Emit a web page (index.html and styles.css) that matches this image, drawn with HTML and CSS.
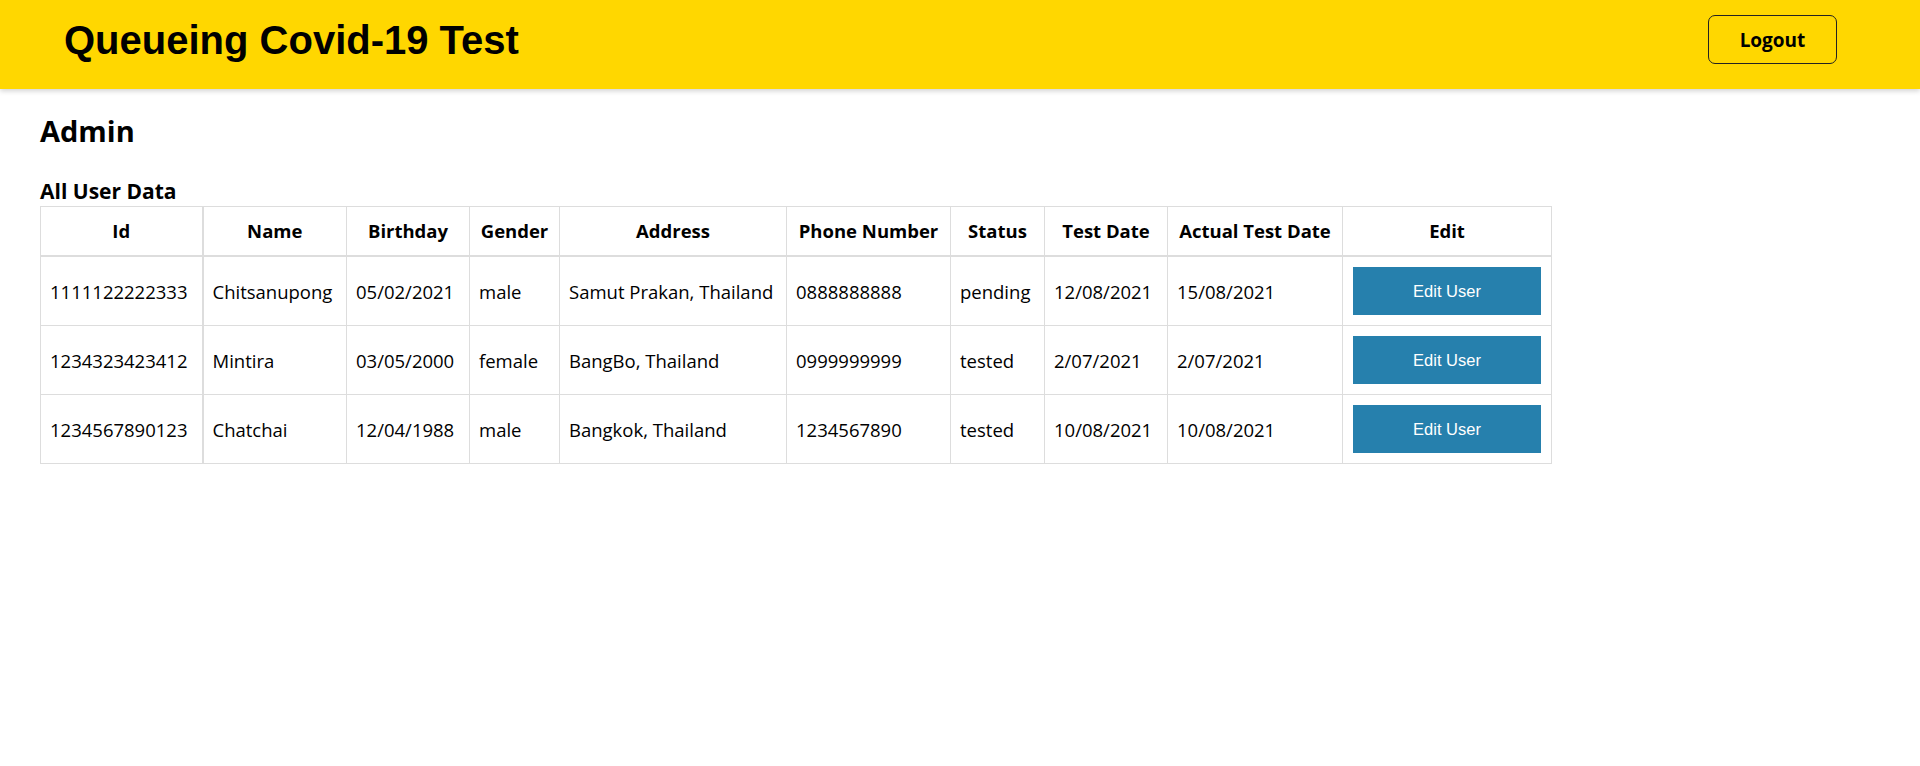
FILE: index.html
```html
<!DOCTYPE html>
<html>
<head>
<meta charset="utf-8">
<title>Queueing Covid-19 Test</title>
<link rel="stylesheet" href="styles.css">
</head>
<body>
<header class="topbar">
  <h1 class="brand">Queueing Covid-19 Test</h1>
  <button class="logout">Logout</button>
</header>
<main class="content">
  <h2 class="page-title">Admin</h2>
  <h3 class="section-title">All User Data</h3>
  <table class="users">
    <colgroup>
      <col class="c-id"><col class="c-name"><col class="c-bday"><col class="c-gender"><col class="c-addr"><col class="c-phone"><col class="c-status"><col class="c-date"><col class="c-actual"><col class="c-edit">
    </colgroup>
    <thead>
      <tr>
        <th class="first">Id</th><th>Name</th><th>Birthday</th><th>Gender</th><th>Address</th><th>Phone Number</th><th>Status</th><th>Test Date</th><th>Actual Test Date</th><th>Edit</th>
      </tr>
    </thead>
    <tbody>
      <tr>
        <td class="first">1111122222333</td><td>Chitsanupong</td><td>05/02/2021</td><td>male</td><td>Samut Prakan, Thailand</td><td>0888888888</td><td>pending</td><td>12/08/2021</td><td>15/08/2021</td><td class="edit"><button class="edit-btn">Edit User</button></td>
      </tr>
      <tr>
        <td class="first">1234323423412</td><td>Mintira</td><td>03/05/2000</td><td>female</td><td>BangBo, Thailand</td><td>0999999999</td><td>tested</td><td>2/07/2021</td><td>2/07/2021</td><td class="edit"><button class="edit-btn">Edit User</button></td>
      </tr>
      <tr>
        <td class="first">1234567890123</td><td>Chatchai</td><td>12/04/1988</td><td>male</td><td>Bangkok, Thailand</td><td>1234567890</td><td>tested</td><td>10/08/2021</td><td>10/08/2021</td><td class="edit"><button class="edit-btn">Edit User</button></td>
      </tr>
    </tbody>
  </table>
</main>
</body>
</html>
```
FILE: styles.css
```css
html, body {
  margin: 0;
  padding: 0;
  background: #ffffff;
}
body {
  font-family: "Open Sans", "Noto Sans", sans-serif;
  color: #000;
}
.topbar {
  box-sizing: border-box;
  height: 89px;
  background: #ffd700;
  display: flex;
  align-items: center;
  justify-content: space-between;
  padding: 0 83px 10px 64px;
  box-shadow: 0 2px 5px rgba(0,0,0,0.18);
  position: relative;
}
.brand {
  margin: 0;
  font-family: "Liberation Sans", Arial, sans-serif;
  font-weight: 700;
  font-size: 40px;
  line-height: 1;
}
.logout {
  width: 129px;
  height: 49px;
  border: 1px solid #222;
  border-radius: 7px;
  background: transparent;
  font-family: "Open Sans", sans-serif;
  font-weight: 700;
  font-size: 19px;
  color: #000;
}
.content {
  padding: 0 40px;
}
.page-title {
  margin: 0;
  padding-top: 23px;
  font-size: 29px;
  line-height: 38px;
  font-weight: 700;
}
.section-title {
  margin: 0;
  padding-top: 25.5px;
  font-size: 21px;
  line-height: 30px;
  font-weight: 700;
}
.users {
  border-collapse: collapse;
  table-layout: fixed;
  width: 1511px;
  font-size: 18.5px;
}
.c-id { width: 162px; }
.c-name { width: 144px; }
.c-bday { width: 123px; }
.c-gender { width: 90px; }
.c-addr { width: 227px; }
.c-phone { width: 164px; }
.c-status { width: 94px; }
.c-date { width: 123px; }
.c-actual { width: 175px; }
.c-edit { width: 209px; }
.users th, .users td {
  border: 1px solid #dddddd;
  padding: 0 9px;
  white-space: nowrap;
}
.users th {
  height: 48.5px;
  font-weight: 700;
  text-align: center;
  border-bottom: 2px solid #dddddd;
}
.users td {
  height: 56px;
  padding-top: 6px;
  padding-bottom: 6px;
  text-align: left;
}
.users .first {
  border-right: 2px solid #dddddd;
}
.users td.edit {
  padding: 0 10px;
}
.edit-btn {
  display: block;
  width: 100%;
  height: 48px;
  border: none;
  background: #2680ad;
  color: #fff;
  font-family: "Liberation Sans", Arial, sans-serif;
  font-size: 16.5px;
}
```
